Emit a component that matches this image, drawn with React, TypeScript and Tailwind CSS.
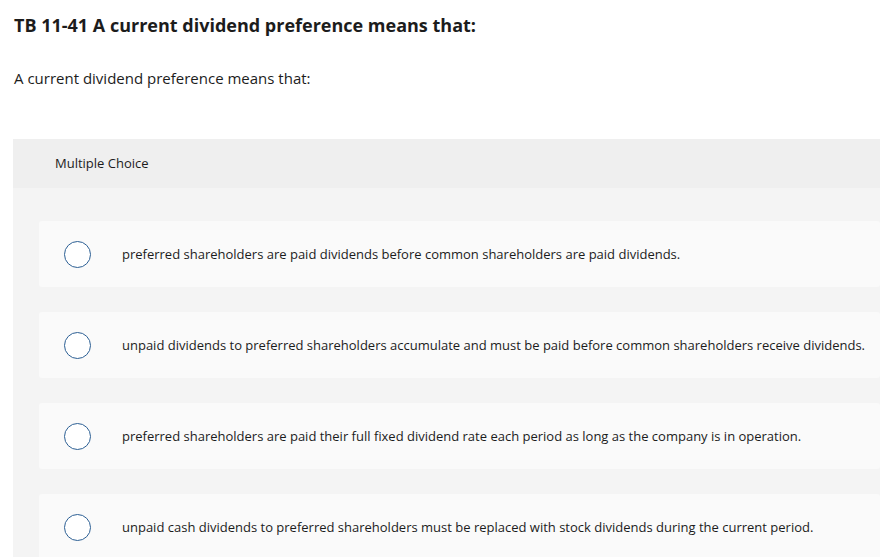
import React from "react";

const options = [
  "preferred shareholders are paid dividends before common shareholders are paid dividends.",
  "unpaid dividends to preferred shareholders accumulate and must be paid before common shareholders receive dividends.",
  "preferred shareholders are paid their full fixed dividend rate each period as long as the company is in operation.",
  "unpaid cash dividends to preferred shareholders must be replaced with stock dividends during the current period.",
];

const App = () => {
  return (
    <div className="w-[880px] h-[557px] overflow-hidden bg-white text-[#1c1c1c] font-['Open_Sans','Liberation_Sans',sans-serif]">
      {/* Question heading */}
      <h1 className="px-[14px] pt-[13px] text-[18px] leading-[24px] font-bold">
        TB 11-41 A current dividend preference means that:
      </h1>
      <p className="px-[14px] mt-[31px] text-[15px] leading-[20px]">
        A current dividend preference means that:
      </p>

      {/* Answer panel */}
      <section className="mt-[51px] ml-[13px] bg-[#f4f4f4]">
        <div className="h-[49px] bg-[#efefef] pl-[42px] flex items-center text-[13px]">
          Multiple Choice
        </div>
        <div className="pt-[33px] pl-[26px] flex flex-col gap-[25px]">
          {options.map((text) => (
            <div
              key={text}
              className="h-[66px] bg-[#fafafa] rounded-[3px] flex items-center pl-[25px]"
            >
              <span className="w-[27px] h-[27px] shrink-0 rounded-full border-[1.75px] border-[#2c5f94] bg-white" />
              <span className="ml-[31px] text-[13px] leading-[18px] whitespace-nowrap">{text}</span>
            </div>
          ))}
        </div>
      </section>
    </div>
  );
};

export default App;
